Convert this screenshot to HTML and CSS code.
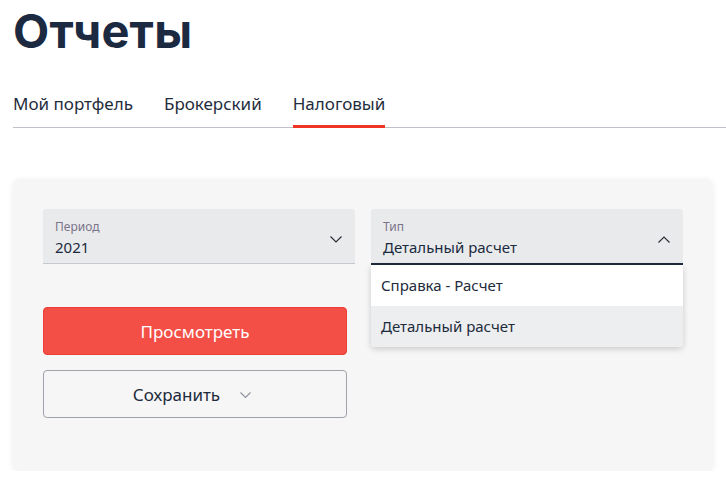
FILE: index.html
```html
<!DOCTYPE html>
<html lang="ru">
<head>
<meta charset="utf-8">
<link rel="stylesheet" href="styles.css">
</head>
<body>
<div class="page">
  <h1 class="title">Отчеты</h1>
  <nav class="tabs">
    <span class="tab">Мой портфель</span>
    <span class="tab">Брокерский</span>
    <span class="tab active">Налоговый</span>
  </nav>
  <section class="card">
    <div class="grid">
      <div class="col">
        <div class="field">
          <div class="field-text">
            <div class="label">Период</div>
            <div class="value">2021</div>
          </div>
          <svg class="chev" width="12" height="7" viewBox="0 0 12 7"><path d="M0.5 0.5 L6 6 L11.5 0.5" fill="none" stroke="#2a2f38" stroke-width="1.2"/></svg>
        </div>
        <button class="btn btn-primary">Просмотреть</button>
        <button class="btn btn-secondary"><span>Сохранить</span><svg class="chev-sm" width="11" height="6" viewBox="0 0 11 6"><path d="M0.5 0.5 L5.5 5.5 L10.5 0.5" fill="none" stroke="#8d939c" stroke-width="1.1"/></svg></button>
      </div>
      <div class="col">
        <div class="field field-open">
          <div class="field-text">
            <div class="label">Тип</div>
            <div class="value">Детальный расчет</div>
          </div>
          <svg class="chev" width="12" height="7" viewBox="0 0 12 7"><path d="M0.5 6.5 L6 1 L11.5 6.5" fill="none" stroke="#2a2f38" stroke-width="1.2"/></svg>
          <ul class="menu">
            <li class="opt">Справка - Расчет</li>
            <li class="opt opt-selected">Детальный расчет</li>
          </ul>
        </div>
      </div>
    </div>
  </section>
</div>
</body>
</html>
```
FILE: styles.css
```css
* { box-sizing: border-box; }
html, body { margin: 0; padding: 0; background: #ffffff; }
body { font-family: "Noto Sans", "Open Sans", sans-serif; color: #1d2b3c; }
.page { padding-left: 13px; width: 726px; }
.title {
  margin: 2px 0 0 0;
  font-family: Inter, "Noto Sans", sans-serif;
  font-weight: 700;
  font-size: 47px;
  line-height: 57px;
  color: #1b2a40;
  letter-spacing: 0.2px;
}
.tabs {
  display: flex;
  gap: 31px;
  margin-top: 33px;
  height: 36px;
  border-bottom: 1px solid #bfc1c8;
}
.tab {
  font-size: 17px;
  line-height: 24px;
  height: 36px;
  padding-bottom: 9px;
  color: #1f2d3d;
  border-bottom: 3px solid transparent;
}
.tab.active { border-bottom-color: #ef3426; }
.card {
  margin-top: 51px;
  width: 700px;
  height: 292px;
  background: #f6f6f6;
  border-radius: 7px;
  box-shadow: 0 1px 6px rgba(0,0,0,0.08);
  padding: 30px 30px 0 30px;
}
.grid { display: grid; grid-template-columns: 312px 312px; column-gap: 16px; }
.col { display: flex; flex-direction: column; }
.field {
  position: relative;
  display: flex;
  align-items: center;
  height: 55px;
  background: #e9eaec;
  border-radius: 3px 3px 0 0;
  border-bottom: 1px solid #c5c9cf;
  padding: 0 13px 0 12px;
}
.field-open { height: 56px; border-bottom: 2px solid #1d2b3c; }
.field-text { flex: 1; padding-top: 4px; }
.label { font-size: 12px; line-height: 16px; color: #7a7388; }
.value { font-size: 15px; line-height: 22px; margin-top: 1px; color: #1b2a3f; }
.chev { margin-top: 6px; flex: none; }
.menu {
  position: absolute;
  top: 100%;
  left: 0;
  right: 0;
  margin: 2px 0 0 0;
  padding: 0;
  list-style: none;
  background: #ffffff;
  border-radius: 0 0 4px 4px;
  box-shadow: 0 2px 6px rgba(0,0,0,0.18);
  overflow: hidden;
}
.opt { height: 41px; line-height: 41px; padding-left: 10px; font-size: 15px; color: #1d2b3c; }
.opt-selected { background: #eceeef; }
.btn {
  width: 304px;
  height: 48px;
  border-radius: 4px;
  font-family: "Noto Sans", "Open Sans", sans-serif;
  font-size: 17px;
  display: flex;
  align-items: center;
  justify-content: center;
}
.btn-primary {
  margin-top: 43px;
  background: #f44f47;
  border: 1px solid #ee3d35;
  color: #ffffff;
}
.btn-secondary {
  margin-top: 15px;
  background: #f6f6f6;
  border: 1px solid #9ea2a9;
  color: #1d2b3c;
  gap: 20px;
  padding-right: 12px;
}
.chev-sm { flex: none; margin-top: 1px; }
```
